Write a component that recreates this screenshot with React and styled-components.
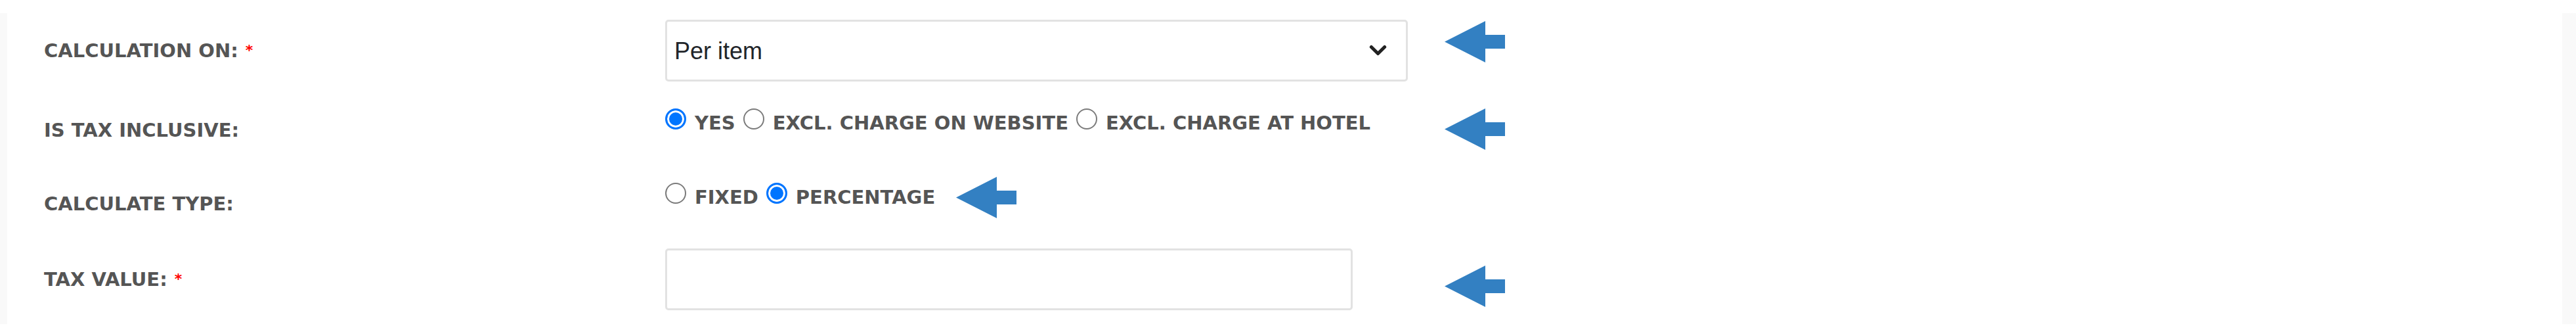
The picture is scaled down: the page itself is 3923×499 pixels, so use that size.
import React from "react"
import styled, { createGlobalStyle } from "styled-components"

const GlobalStyle = createGlobalStyle`
	* {
		margin: 0;
		padding: 0;
		box-sizing: border-box;
	}
	body {
		background: #fff;
	}
`

const Frame = styled.div`
	margin-top: 20px;
	height: 473px;
	background: #f9f9f9;
	padding: 0 21px 0 11px;
`

const Card = styled.div`
	height: 100%;
	background: #fff;
	padding-left: 56px;
	display: flex;
	flex-direction: column;
`

const Row = styled.div`
	display: grid;
	grid-template-columns: 946px 1187px 92px;
	align-items: center;
	height: 94px;
	margin-top: ${props => props.$gap}px;
`

const Label = styled.div`
	font-family: "DejaVu Sans", sans-serif;
	font-weight: bold;
	font-size: 29px;
	line-height: 1;
	color: #555;
	white-space: nowrap;
`

const Required = styled.span`
	color: #f00;
	font-size: 22px;
	margin-left: 11px;
	vertical-align: 3px;
`

const SelectBox = styled.div`
	position: relative;
	width: 1131px;
	height: 94px;
`

const Select = styled.select`
	appearance: none;
	width: 100%;
	height: 100%;
	border: 3px solid #e2e2e2;
	border-radius: 5px;
	padding: 0 70px 0 11px;
	font-family: "Liberation Sans", Arial, sans-serif;
	font-size: 36px;
	color: #212529;
	background: #fff;
	outline: none;
`

const Chevron = styled.svg`
	position: absolute;
	right: 32px;
	top: 38px;
	width: 27px;
	height: 17px;
	pointer-events: none;
`

const TextInput = styled.input`
	width: 1047px;
	height: 94px;
	border: 3px solid #e2e2e2;
	border-radius: 5px;
	background: #fff;
	outline: none;
	font-family: "Liberation Sans", Arial, sans-serif;
	font-size: 36px;
	padding: 0 14px;
`

const RadioGroup = styled.div`
	display: flex;
	align-items: center;
	gap: 12px;
	margin-bottom: ${props => props.$raise * 2}px;
`

const Option = styled.label`
	display: flex;
	align-items: center;
	gap: 13px;
	font-family: "DejaVu Sans", sans-serif;
	font-weight: bold;
	font-size: 29px;
	line-height: 1;
	color: #555;
	white-space: nowrap;
`

const Radio = styled.input.attrs({ type: "radio" })`
	appearance: none;
	width: 32px;
	height: 32px;
	margin: 0 0 13px 0;
	border-radius: 50%;
	border: 2.5px solid #7b7b7b;
	background: #fff;
	&:checked {
		border: 3px solid #0075ff;
		background: #0075ff;
		box-shadow: inset 0 0 0 3px #fff;
	}
`

const ArrowSvg = styled.svg`
	width: 92px;
	height: 63px;
	display: block;
	margin: ${props => (props.$dy > 0 ? `${props.$dy * 2}px 0 0 ${props.$left || 0}px` : `0 0 ${-props.$dy * 2}px ${props.$left || 0}px`)};
`

const Arrow = ({ dy = 0, left = 0 }) => (
	<ArrowSvg $dy={dy} $left={left} viewBox="0 0 92 63">
		<polygon points="0,31.5 62,0 62,21 92,21 92,42 62,42 62,63" fill="#3380c2" />
	</ArrowSvg>
)

const App = () => {
	return (
		<>
			<GlobalStyle />
			<Frame>
				<Card>
					<Row $gap={10}>
						<Label>
							CALCULATION ON:<Required>*</Required>
						</Label>
						<SelectBox>
							<Select defaultValue="item">
								<option value="item">Per item</option>
								<option value="booking">Per booking</option>
							</Select>
							<Chevron viewBox="0 0 16 10">
								<polyline points="2,2 8,8 14,2" fill="none" stroke="#222" strokeWidth="3" strokeLinecap="round" strokeLinejoin="round" />
							</Chevron>
						</SelectBox>
						<Arrow dy={-13.5} />
					</Row>
					<Row $gap={27}>
						<Label>IS TAX INCLUSIVE:</Label>
						<RadioGroup $raise={11}>
							<Option>
								<Radio name="inclusive" defaultChecked />
								YES
							</Option>
							<Option>
								<Radio name="inclusive" />
								EXCL. CHARGE ON WEBSITE
							</Option>
							<Option>
								<Radio name="inclusive" />
								EXCL. CHARGE AT HOTEL
							</Option>
						</RadioGroup>
						<Arrow dy={-1.5} />
					</Row>
					<Row $gap={18}>
						<Label>CALCULATE TYPE:</Label>
						<RadioGroup $raise={9.5}>
							<Option>
								<Radio name="calctype" />
								FIXED
							</Option>
							<Option>
								<Radio name="calctype" defaultChecked />
								PERCENTAGE
							</Option>
							<Arrow left={20} />
						</RadioGroup>
						<div />
					</Row>
					<Row $gap={21}>
						<Label>
							TAX VALUE:<Required>*</Required>
						</Label>
						<TextInput type="text" />
						<Arrow dy={10.5} />
					</Row>
				</Card>
			</Frame>
		</>
	)
}

export default App
